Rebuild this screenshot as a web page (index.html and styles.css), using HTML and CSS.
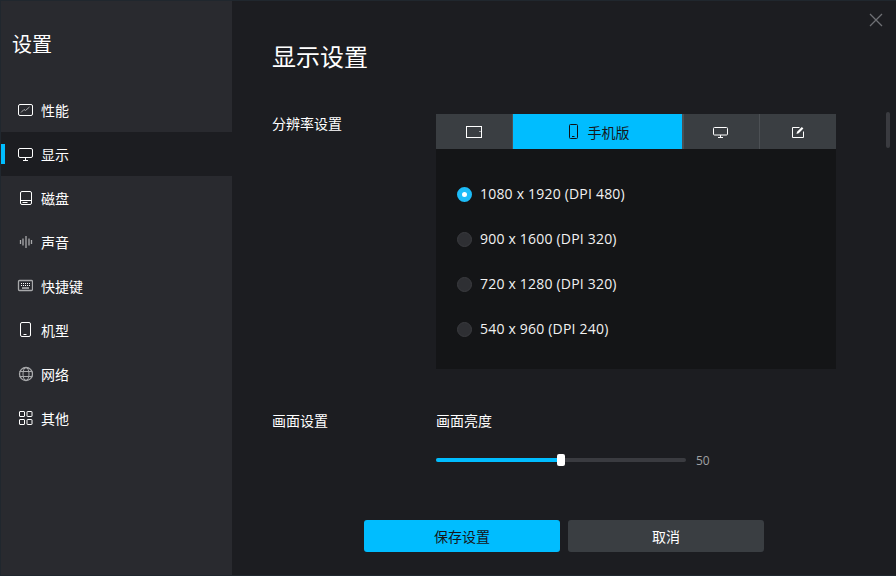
FILE: index.html
```html
<!DOCTYPE html>
<html lang="zh-CN">
<head>
<meta charset="utf-8">
<title>设置</title>
<link rel="stylesheet" href="styles.css">
</head>
<body>
<div class="window">
  <aside class="sidebar">
    <h2 class="side-title">设置</h2>
    <nav class="nav">
      <div class="nav-item"><svg class="ico" viewBox="0 0 16 16"><rect x="1.500" y="2.500" width="14" height="11" rx="1.500" class="s"/><path d="M4 10.500l3-3 1.500 1 4-3.500" class="s dim"/></svg><span>性能</span></div>
      <div class="nav-item active"><svg class="ico" viewBox="0 0 16 16"><rect x="1.500" y="2.500" width="14" height="9" rx="1.500" class="s"/><path d="M8.500 11.500v2.500M6 14.500h5" class="s"/></svg><span>显示</span></div>
      <div class="nav-item"><svg class="ico" viewBox="0 0 16 16"><rect x="3.500" y="1.500" width="11" height="13" rx="1.500" class="s"/><path d="M3.500 10.500h11M5.500 12.500h5" class="s"/></svg><span>磁盘</span></div>
      <div class="nav-item"><svg class="ico" viewBox="0 0 16 16"><path d="M3.500 6v4M6 4.500v7M9 2v12M12 4.500v7M14.500 6v4" class="s dim wide"/></svg><span>声音</span></div>
      <div class="nav-item"><svg class="ico" viewBox="0 0 16 16"><rect x="1.500" y="2.500" width="14" height="10" rx="1" class="s dim wide"/><path d="M4 5.500h9" class="s dash"/><path d="M4 7.500h9" class="s dash"/><path d="M5 10h7" class="s"/></svg><span>快捷键</span></div>
      <div class="nav-item"><svg class="ico" viewBox="0 0 16 16"><rect x="3.500" y=".5" width="10" height="14" rx="1.500" class="s"/><path d="M6.500 12.500h3" class="s"/></svg><span>机型</span></div>
      <div class="nav-item"><svg class="ico" viewBox="0 0 16 16"><circle cx="9" cy="8" r="6.500" class="s dim wide"/><ellipse cx="9" cy="8" rx="3" ry="6.500" class="s dim"/><path d="M2.500 5.500h13M2.500 10.500h13" class="s dim"/></svg><span>网络</span></div>
      <div class="nav-item"><svg class="ico" viewBox="0 0 16 16"><rect x="2.500" y="1.500" width="5" height="5" rx=".5" class="s"/><rect x="10" y="1.500" width="5" height="5" rx=".5" class="s"/><rect x="2.500" y="9.500" width="5" height="5" rx=".5" class="s"/><rect x="10" y="9.500" width="5" height="5" rx=".5" class="s"/></svg><span>其他</span></div>
    </nav>
  </aside>
  <main class="main">
    <svg class="close" viewBox="0 0 14 14"><path d="M1 1l12 12M13 1L1 13"/></svg>
    <div class="scrollbar"></div>
    <h1 class="title">显示设置</h1>
    <section class="row res-row">
      <div class="label">分辨率设置</div>
      <div class="panel">
        <div class="tabs">
          <div class="tab tab-a"><svg class="tab-ico" viewBox="0 0 16 16"><rect x=".5" y="2.500" width="15" height="11" class="s"/><path d="M14 7v1" class="s"/></svg></div>
          <div class="tab tab-on"><svg class="tab-ico" viewBox="0 0 16 16"><rect x="3.500" y=".5" width="8" height="14" rx="1" class="s"/><path d="M6 12.500h2.500" class="s"/></svg><span>手机版</span></div>
          <div class="tab tab-c"><svg class="tab-ico" viewBox="0 0 16 16"><rect x=".5" y="3.500" width="14" height="7.500" rx="1" class="s"/><path d="M7.500 11v2M5 13.500h5" class="s"/></svg></div>
          <div class="tab tab-d"><svg class="tab-ico" viewBox="0 0 16 16"><path d="M9.500 3.500h-7v10h11v-6" class="s"/><path d="M6.500 10l.6-2.200 4.700-4.800 1.600 1.500-4.700 4.800z" class="fill"/></svg></div>
        </div>
        <div class="options">
          <label class="opt"><span class="radio on"></span><span class="opt-text">1080 x 1920 (DPI 480)</span></label>
          <label class="opt"><span class="radio"></span><span class="opt-text">900 x 1600 (DPI 320)</span></label>
          <label class="opt"><span class="radio"></span><span class="opt-text">720 x 1280 (DPI 320)</span></label>
          <label class="opt"><span class="radio"></span><span class="opt-text">540 x 960 (DPI 240)</span></label>
        </div>
      </div>
    </section>
    <section class="row pic-row">
      <div class="label">画面设置</div>
      <div class="pic">
        <div class="pic-label">画面亮度</div>
        <div class="slider-line">
          <div class="track"><div class="fill-bar"></div><div class="thumb"></div></div>
          <span class="val">50</span>
        </div>
      </div>
    </section>
    <footer class="footer">
      <button class="btn primary">保存设置</button>
      <button class="btn ghost">取消</button>
    </footer>
  </main>
</div>
</body>
</html>
```
FILE: styles.css
```css
* { box-sizing: border-box; }
html, body { margin: 0; padding: 0; background: #1c1d21; }
body {
  width: 896px; height: 576px; overflow: hidden;
  font-family: "Open Sans", "Noto Sans CJK SC", sans-serif;
  color: #fff;
}
.window {
  width: 896px; height: 576px; display: flex;
  border: 1px solid #20272e; border-width: 1px 0 1px 1px;
  background: #1c1d21;
}
.sidebar { width: 231px; flex: none; background: #292a2f; }
.side-title {
  margin: 0; padding: 29px 0 0 11px; height: 87px;
  font-size: 20px; line-height: 28px; font-weight: 400;
  font-family: "Noto Sans CJK SC", sans-serif;
}
.nav { display: flex; flex-direction: column; }
.nav-item {
  position: relative; height: 44px; display: flex; align-items: center;
  padding-left: 16px; gap: 8px; font-size: 14px;
  font-family: "Noto Sans CJK SC", sans-serif;
}
.nav-item.active { background: #1c1d21; }
.nav-item.active::before {
  content: ""; position: absolute; left: 0; top: 12px;
  width: 4px; height: 20px; background: #00bdff;
}
.ico { width: 16px; height: 16px; flex: none; }
.s { fill: none; stroke: #fff; stroke-width: 1; }
.s.dim { stroke: #a8a9ab; }
.s.wide { stroke-width: 1.300; }
.s.dash { stroke-dasharray: 1 1; }
.fill { fill: #fff; }
.main { position: relative; flex: 1; padding: 0 0 0 40px; }
.close {
  position: absolute; right: 13px; top: 12px; width: 14px; height: 14px;
  fill: none; stroke: #6e7074; stroke-width: 1.300;
}
.scrollbar {
  position: absolute; left: 654px; top: 111px; width: 4px; height: 36px;
  border-radius: 2px; background: #3a3b40;
}
.title {
  margin: 0; padding-top: 37px; height: 113px;
  font-size: 24px; line-height: 36px; font-weight: 400;
  font-family: "Noto Sans CJK SC", sans-serif;
}
.row { display: flex; }
.label {
  width: 164px; flex: none; font-size: 14px; line-height: 18px;
  font-family: "Noto Sans CJK SC", sans-serif;
}
.panel { width: 400px; height: 255px; background: #141517; }
.tabs { display: flex; height: 35px; background: #3a3e42; }
.tab {
  display: flex; align-items: center; justify-content: center; gap: 6px;
  font-size: 14px; font-family: "Noto Sans CJK SC", sans-serif;
}
.tab-a { width: 77px; border-right: 1px solid #4c5054; }
.tab-on { width: 169px; background: #00bdff; color: #16171a; }
.tab-on .s { stroke: #101114; }
.tab-c { width: 77px; border-left: 2px solid #4c5054; padding-right: 1px; }
.tab-d { width: 77px; border-left: 1px solid #4c5054; }
.tab-ico { width: 16px; height: 16px; }
.options { display: flex; flex-direction: column; padding-top: 23px; }
.opt {
  display: flex; align-items: center; height: 45px; padding-left: 21px; gap: 8px;
  font-size: 14px; color: #f2f2f2; letter-spacing: .2px;
}
.opt-text { padding-bottom: 2px; }
.radio {
  width: 15px; height: 15px; border-radius: 50%; flex: none;
  background: #2e2f33; border: 1px solid #3a3b3f;
}
.radio.on { background: #fff; border: 5px solid #1dbcf8; }
.pic-row { margin-top: 42px; }
.pic { width: 400px; }
.pic-label { font-size: 14px; line-height: 18px; font-family: "Noto Sans CJK SC", sans-serif; }
.slider-line { display: flex; align-items: center; margin-top: 21px; gap: 10px; height: 20px; }
.track { position: relative; width: 250px; height: 4px; border-radius: 2px; background: #3a3b40; }
.fill-bar { width: 125px; height: 4px; border-radius: 2px; background: #00bdff; }
.thumb {
  position: absolute; left: 121px; top: -4px; width: 8px; height: 12px;
  border-radius: 2px; background: #fff;
}
.val { font-size: 12px; color: #a0a1a3; }
.footer { display: flex; justify-content: center; gap: 8px; margin: 50px 0 0 -40px; }
.btn {
  width: 196px; height: 32px; border: 0; border-radius: 3px; padding: 0;
  font-size: 14px; font-family: "Noto Sans CJK SC", sans-serif;
}
.primary { background: #00bdff; color: #16171a; }
.ghost { background: #3a3e42; color: #fff; }
```
